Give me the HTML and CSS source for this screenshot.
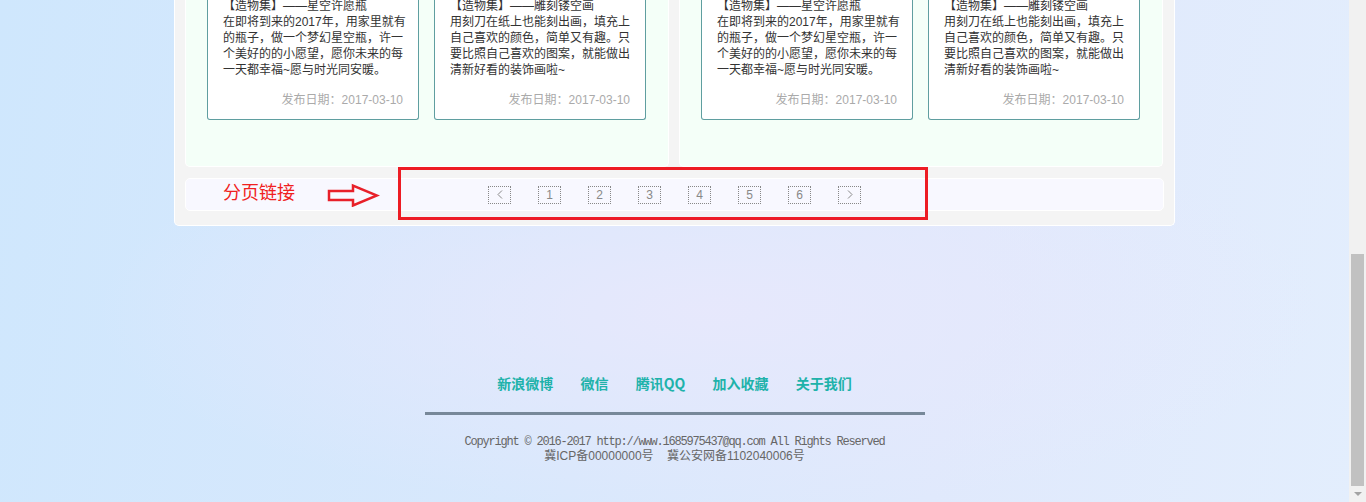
FILE: index.html
```html
<!DOCTYPE html>
<html lang="zh-CN">
<head>
    <meta charset="UTF-8">
    <meta name="viewport" content="width=device-width, initial-scale=1.0">
    <title>造物集</title>
    <link rel="stylesheet" href="styles.css">
</head>
<body>

<div class="page">
    <div class="main">
        <div class="cols">
            <div class="panel">
                <div class="card">
                    <h4>【造物集】——星空许愿瓶</h4>
                    <p class="desc">在即将到来的2017年，用家里就有的瓶子，做一个梦幻星空瓶，许一个美好的的小愿望，愿你未来的每一天都幸福~愿与时光同安暖。</p>
                    <p class="date">发布日期：2017-03-10</p>
                </div>
                <div class="card">
                    <h4>【造物集】——雕刻镂空画</h4>
                    <p class="desc">用刻刀在纸上也能刻出画，填充上自己喜欢的颜色，简单又有趣。只要比照自己喜欢的图案，就能做出清新好看的装饰画啦~</p>
                    <p class="date">发布日期：2017-03-10</p>
                </div>
            </div>
            <div class="panel">
                <div class="card">
                    <h4>【造物集】——星空许愿瓶</h4>
                    <p class="desc">在即将到来的2017年，用家里就有的瓶子，做一个梦幻星空瓶，许一个美好的的小愿望，愿你未来的每一天都幸福~愿与时光同安暖。</p>
                    <p class="date">发布日期：2017-03-10</p>
                </div>
                <div class="card">
                    <h4>【造物集】——雕刻镂空画</h4>
                    <p class="desc">用刻刀在纸上也能刻出画，填充上自己喜欢的颜色，简单又有趣。只要比照自己喜欢的图案，就能做出清新好看的装饰画啦~</p>
                    <p class="date">发布日期：2017-03-10</p>
                </div>
            </div>
        </div>

        <div class="pager-bar">
            <div class="pager-note">
                <span class="note-text">分页链接</span>
                <svg class="note-arrow" width="54" height="24" viewBox="0 0 54 24">
                    <polygon points="3,8 27,8 27,2.5 51,12.5 27,22.5 27,17 3,17" fill="none" stroke="#e8202a" stroke-width="2.5"/>
                </svg>
            </div>
            <div class="pager">
                <a href="#" title="上一页"><svg width="6" height="9" viewBox="0 0 6 9"><polyline points="5,0.5 1,4.5 5,8.5" fill="none" stroke="#888" stroke-width="1"/></svg></a>
                <a href="#">1</a>
                <a href="#">2</a>
                <a href="#">3</a>
                <a href="#">4</a>
                <a href="#">5</a>
                <a href="#">6</a>
                <a href="#" title="下一页"><svg width="6" height="9" viewBox="0 0 6 9"><polyline points="1,0.5 5,4.5 1,8.5" fill="none" stroke="#888" stroke-width="1"/></svg></a>
            </div>
            <div></div>
            <div class="note-box"></div>
        </div>
    </div>

    <div class="footer">
        <div class="links">
            <a href="#">新浪微博</a>
            <a href="#">微信</a>
            <a href="#">腾讯QQ</a>
            <a href="#">加入收藏</a>
            <a href="#">关于我们</a>
        </div>
        <hr class="rule">
        <p class="copy">Copyright © 2016-2017 http://www.1685975437@qq.com All Rights Reserved</p>
        <p class="beian">冀ICP备00000000号&nbsp;&nbsp;&nbsp; 冀公安网备1102040006号</p>
    </div>
</div>

<div class="scrollbar">
    <div class="thumb"></div>
    <div class="arrow-down"></div>
</div>

</body>
</html>
```

FILE: styles.css
```css
body {
    margin: 0;
    height: 502px;
    overflow: hidden;
    display: flex;
    font-family: "Liberation Sans", "Noto Sans CJK SC", sans-serif;
    background:
        radial-gradient(ellipse 45% 40% at 52% 62%, rgba(232, 232, 252, 0.9), rgba(232, 232, 252, 0) 100%),
        linear-gradient(100deg, #cfe7fd 0%, #d9e8fc 45%, #e0e9fc 70%, #e3eefd 100%);
}
.page {
    flex: 1;
    min-width: 0;
}
.main {
    width: 979px;
    margin: 0 auto;
    padding: 0 10px 14px;
    background: #f4f4f4;
    border: 1px solid #fff;
    border-top: none;
    border-radius: 0 0 5px 5px;
}
.cols {
    display: flex;
    gap: 10px;
}
.panel {
    width: 484px;
    box-sizing: border-box;
    display: flex;
    gap: 15px;
    padding: 0 0 46px 21px;
    background: #f4fff8;
    border: 1px solid #fff;
    border-top: none;
    border-radius: 0 0 5px 5px;
}
.card {
    width: 212px;
    box-sizing: border-box;
    margin-top: -2px;
    padding: 0 11px 11px 15px;
    background: #fff;
    border: 1px solid #5f9ea0;
    border-top: none;
    border-radius: 0 0 3px 3px;
    color: #333;
    font-size: 12px;
    line-height: 16px;
}
.card h4 {
    margin: 0;
    font-size: 12px;
    font-weight: normal;
}
.card .desc {
    margin: 0;
}
.card .date {
    margin: 14px 4px 0 0;
    text-align: right;
    color: #aaa;
}
.pager-bar {
    position: relative;
    display: grid;
    grid-template-columns: 1fr auto 1fr;
    align-items: center;
    height: 31px;
    margin-top: 11px;
    background: #f8f8ff;
    border: 1px solid #fff;
    border-radius: 5px;
}
.pager-note {
    display: flex;
    align-items: center;
    padding-left: 37px;
}
.note-text {
    font-size: 18px;
    line-height: 1;
    color: #f02020;
    margin-top: -3px;
}
.note-arrow {
    margin-left: 31px;
}
.pager {
    display: flex;
    gap: 27px;
}
.pager a {
    width: 21px;
    height: 16px;
    display: flex;
    align-items: center;
    justify-content: center;
    border: 1px dotted #888;
    font-size: 12px;
    line-height: 16px;
    color: #888;
    text-decoration: none;
}
.note-box {
    position: absolute;
    left: 212px;
    top: -12px;
    width: 530px;
    height: 53px;
    box-sizing: border-box;
    border: 3px solid #ed1c24;
    pointer-events: none;
}
.footer {
    text-align: center;
    padding-top: 147px;
}
.links {
    font-family: "Noto Sans CJK SC", sans-serif;
    font-size: 14px;
    font-weight: bold;
    line-height: 20px;
}
.links a {
    margin: 0 12px;
    color: #20b2aa;
    text-decoration: none;
}
.rule {
    width: 500px;
    height: 3px;
    margin: 19px auto 20px;
    border: 0;
    background: #778899;
}
.copy {
    margin: 0;
    font-family: "Liberation Mono", monospace;
    font-size: 12px;
    line-height: 14px;
    letter-spacing: -1.2px;
    color: #666;
}
.beian {
    margin: 0;
    font-size: 12px;
    line-height: 14px;
    color: #666;
}
.scrollbar {
    flex: none;
    width: 17px;
    display: flex;
    flex-direction: column;
    justify-content: flex-end;
    background: #f1f1f1;
}
.thumb {
    height: 232px;
    margin: 0 2px;
    background: #c1c1c1;
}
.arrow-down {
    height: 16px;
    box-sizing: border-box;
    padding-top: 6px;
    display: flex;
    justify-content: center;
}
.arrow-down::before {
    content: "";
    border-left: 4px solid transparent;
    border-right: 4px solid transparent;
    border-top: 4px solid #a3a3a3;
    height: 0;
}
```
